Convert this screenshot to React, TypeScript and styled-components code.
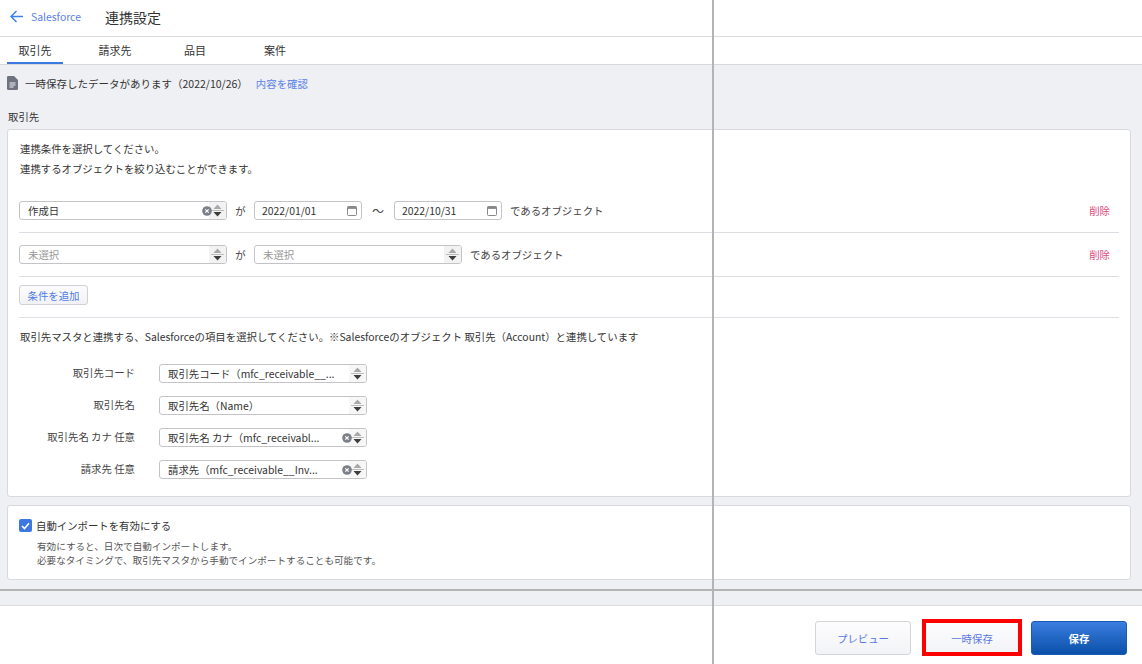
import React from "react";
import styled, { createGlobalStyle } from "styled-components";

const Global = createGlobalStyle`
  html, body { margin: 0; padding: 0; height: 100%; overflow: hidden; background: #fff; }
  body { font-family: "Noto Sans CJK JP", "Noto Sans", sans-serif; color: #333; }
  #root { height: 100%; }
  * { box-sizing: border-box; }
`;

const Page = styled.div`
  position: relative;
  height: 664px;
  display: flex;
  flex-direction: column;
  overflow: hidden;
`;
const Header = styled.header`
  height: 37px;
  flex: none;
  display: flex;
  align-items: center;
  padding-left: 10px;
  border-bottom: 1px solid #dcdce0;
`;
const BackLink = styled.a`
  display: flex;
  align-items: center;
  gap: 8px;
  width: 95px;
  font-size: 10.4px;
  color: #5b82e6;
  margin-top: -4px;
`;
const Title = styled.h1`
  margin: -2px 0 0 0;
  font-size: 14px;
  font-weight: 400;
  color: #333;
`;
const Tabs = styled.nav`
  height: 28px;
  flex: none;
  display: flex;
  gap: 24px;
  padding-left: 7px;
  border-bottom: 1px solid #d8d8dc;
`;
const Tab = styled.div<{ $active?: boolean }>`
  width: 56px;
  height: 27px;
  display: flex;
  align-items: center;
  justify-content: center;
  font-size: 11px;
  color: #333;
  padding-top: 1px;
  border-bottom: 2px solid ${(p) => (p.$active ? "#3b78e0" : "transparent")};
`;
const Main = styled.main`
  flex: 1;
  background: #eff0f4;
  padding: 0 11px 0 7px;
`;
const Notice = styled.div`
  display: flex;
  align-items: center;
  height: 38px;
  padding-bottom: 2px;
  font-size: 10.5px;
  color: #333;
  svg { margin-right: 7px; }
`;
const NoticeLink = styled.a`
  color: #5b82e6;
  margin-left: 8px;
  font-size: 10.4px;
`;
const SectionLabel = styled.div`
  margin-top: 5px;
  height: 21px;
  line-height: 18px;
  font-size: 10.4px;
  color: #333;
  padding-left: 1px;
`;
const Card = styled.section`
  background: #fff;
  border: 1px solid #d8d8de;
  border-radius: 3px;
  padding: 9px 11px 17px;
`;
const AutoCard = styled(Card)`
  margin-top: 8px;
  height: 75px;
  padding: 12px 11px 0;
`;
const Lead = styled.p`
  margin: 0;
  padding-left: 1px;
  line-height: 20px;
  font-size: 10.4px;
  color: #333;
`;
const Conditions = styled.div`
  margin-top: 10px;
`;
const CondRow = styled.div`
  display: flex;
  align-items: center;
  height: 44px;
  border-bottom: 1px solid #dddde4;
  font-size: 10.4px;
`;
const SelectBox = styled.div<{ $w: number; $muted?: boolean }>`
  position: relative;
  width: ${(p) => p.$w}px;
  height: 19px;
  flex: none;
  display: flex;
  align-items: center;
  border: 1px solid #c4c4c8;
  border-radius: 3px;
  padding-left: 8px;
  font-size: 10.4px;
  color: ${(p) => (p.$muted ? "#999" : "#333")};
  background: #fff;
  overflow: hidden;
`;
const SelectText = styled.span`
  flex: 1;
  white-space: nowrap;
  overflow: hidden;
`;
const Stepper = styled.span<{ $plain?: boolean }>`
  width: 17px;
  height: 100%;
  flex: none;
  display: flex;
  align-items: center;
  justify-content: center;
  background: ${(p) => (p.$plain ? "#f6f6f6" : "#f2f2f2")};
`;
const ClearIcon = styled.svg`
  flex: none;
  margin-right: -3px;
  position: relative;
  z-index: 1;
`;
const Conj = styled.span<{ $w: number; $big?: boolean }>`
  width: ${(p) => p.$w}px;
  flex: none;
  text-align: center;
  font-size: ${(p) => (p.$big ? "12px" : "10.4px")};
  color: #444;
`;
const DateBox = styled.div<{ $muted?: boolean }>`
  width: 108px;
  height: 19px;
  flex: none;
  display: flex;
  align-items: center;
  justify-content: space-between;
  border: 1px solid #c4c4c8;
  border-radius: 3px;
  padding: 0 4px 0 7px;
  font-size: 10.4px;
  color: ${(p) => (p.$muted ? "#999" : "#333")};
`;
const Suffix = styled.span`
  margin-left: 8px;
  font-size: 10.4px;
  color: #444;
`;
const Delete = styled.a`
  margin-left: auto;
  margin-right: 9px;
  font-size: 10.4px;
  color: #dc4c80;
`;
const AddButton = styled.button`
  display: block;
  margin: 8px 0 12px;
  width: 69px;
  height: 20px;
  padding: 0;
  font: inherit;
  font-size: 10.4px;
  color: #4f7be6;
  background: linear-gradient(#fcfcfd, #f1f2f5);
  border: 1px solid #d0d0d6;
  border-radius: 3px;
`;
const MapLead = styled(Lead)`
  border-top: 1px solid #dddde4;
  padding-top: 9px;
  height: 30px;
  line-height: 20px;
`;
const FormGrid = styled.div`
  margin-top: 17px;
  display: grid;
  grid-template-columns: 116px 208px;
  column-gap: 24px;
  row-gap: 13px;
  align-items: center;
`;
const FieldLabel = styled.label`
  font-size: 10.4px;
  color: #444;
  text-align: right;
  line-height: 19px;
  margin-top: -2px;
`;
const CheckLine = styled.div`
  display: flex;
  align-items: center;
  gap: 4px;
  font-size: 10.4px;
  color: #333;
`;
const Check = styled.span`
  width: 13px;
  height: 13px;
  border-radius: 2px;
  background: #3b78e0;
  display: flex;
  align-items: center;
  justify-content: center;
`;
const Help = styled.p`
  margin: 6px 0 0 18px;
  font-size: 9.6px;
  line-height: 14px;
  color: #555;
`;
const Footer = styled.footer`
  height: 59px;
  flex: none;
  display: flex;
  justify-content: flex-end;
  align-items: flex-start;
  gap: 12px;
  padding: 15px 15px 0 0;
  background: #fff;
  border-top: 1px solid #dcdce0;
`;
const FootSlot = styled.div<{ $pull?: boolean }>`
  position: relative;
  width: 96px;
  height: 34px;
  margin-left: ${(p) => (p.$pull ? "1px" : "0")};
  margin-right: ${(p) => (p.$pull ? "-1px" : "0")};
`;
const FootButton = styled.button`
  width: 96px;
  height: 34px;
  padding: 0;
  font: inherit;
  font-size: 10.4px;
  color: #5b78e0;
  background: linear-gradient(#fdfdfe, #f2f3f6);
  border: 1px solid #d4d4d8;
  border-radius: 3px;
`;
const SaveButton = styled(FootButton)`
  color: #fff;
  font-weight: 700;
  background: linear-gradient(#3a7de0, #0a50a8);
  border: 1px solid #1a5cb4;
`;
const Highlight = styled.div`
  position: absolute;
  top: -2px;
  bottom: -1px;
  left: -2px;
  right: -2px;
  border: 4px solid #f00;
`;
const VLine = styled.div`
  position: absolute;
  top: 0;
  bottom: 0;
  left: 712px;
  width: 2px;
  background: #b4b4b4;
`;
const HLine = styled.div`
  position: absolute;
  left: 0;
  right: 0;
  top: 589px;
  height: 2px;
  background: #b4b4b4;
`;

const Arrows = () => (
  <svg width="13" height="14" viewBox="0 0 13 14">
    <path d="M6.5 0.5 L10.5 5 H2.5 Z" fill="#a8a8a8" />
    <rect x="0" y="6" width="13" height="1" fill="#bcbcbc" />
    <path d="M6.5 12.5 L10.5 8 H2.5 Z" fill="#3c3c3c" />
  </svg>
);
const Clear = () => (
  <ClearIcon width="10" height="10" viewBox="0 0 10 10">
    <circle cx="5" cy="5" r="4.8" fill="#7b7f88" />
    <path d="M3.3 3.3 L6.7 6.7 M6.7 3.3 L3.3 6.7" stroke="#fff" strokeWidth="1.2" />
  </ClearIcon>
);
const Calendar = () => (
  <svg width="10" height="10" viewBox="0 0 10 10">
    <rect x="0.5" y="0.5" width="9" height="9" rx="1" fill="none" stroke="#888" strokeWidth="1" />
    <rect x="0.5" y="0.5" width="9" height="2.4" fill="#888" />
  </svg>
);

const Select = ({ w, text, muted, clear, plain }: { w: number; text: string; muted?: boolean; clear?: boolean; plain?: boolean }) => (
  <SelectBox $w={w} $muted={muted}>
    <SelectText>{text}</SelectText>
    {clear && <Clear />}
    <Stepper $plain={plain}><Arrows /></Stepper>
  </SelectBox>
);

const fields = [
  { label: "取引先コード", text: "取引先コード（mfc_receivable__...", clear: false },
  { label: "取引先名", text: "取引先名（Name）", clear: false },
  { label: "取引先名 カナ 任意", text: "取引先名 カナ（mfc_receivabl...", clear: true },
  { label: "請求先 任意", text: "請求先（mfc_receivable__Inv...", clear: true },
];

export default function App() {
  return (
    <Page>
      <Global />
      <Header>
        <BackLink>
          <svg width="13" height="13" viewBox="0 0 13 13">
            <path d="M13 6.5 H1.5 M6.5 1 L1 6.5 L6.5 12" fill="none" stroke="#3b82f0" strokeWidth="1.5" />
          </svg>
          Salesforce
        </BackLink>
        <Title>連携設定</Title>
      </Header>
      <Tabs>
        <Tab $active>取引先</Tab>
        <Tab>請求先</Tab>
        <Tab>品目</Tab>
        <Tab>案件</Tab>
      </Tabs>
      <Main>
        <Notice>
          <svg width="11" height="14" viewBox="0 0 11 14">
            <path d="M1.2 0 H7 L11 4 V12.8 Q11 14 9.8 14 H1.2 Q0 14 0 12.8 V1.2 Q0 0 1.2 0 Z" fill="#6f7380" />
            <path d="M2.5 7 H8.5 M2.5 9 H8.5 M2.5 11 H6.5" stroke="#eff0f4" strokeWidth="1" />
          </svg>
          一時保存したデータがあります（2022/10/26）
          <NoticeLink>内容を確認</NoticeLink>
        </Notice>
        <SectionLabel>取引先</SectionLabel>
        <Card>
          <Lead>連携条件を選択してください。</Lead>
          <Lead>連携するオブジェクトを絞り込むことができます。</Lead>
          <Conditions>
            <CondRow>
              <Select w={208} text="作成日" clear />
              <Conj $w={27}>が</Conj>
              <DateBox>2022/01/01<Calendar /></DateBox>
              <Conj $w={32} $big>〜</Conj>
              <DateBox>2022/10/31<Calendar /></DateBox>
              <Suffix>であるオブジェクト</Suffix>
              <Delete>削除</Delete>
            </CondRow>
            <CondRow>
              <Select w={208} text="未選択" muted />
              <Conj $w={27}>が</Conj>
              <Select w={208} text="未選択" muted />
              <Suffix>であるオブジェクト</Suffix>
              <Delete>削除</Delete>
            </CondRow>
          </Conditions>
          <AddButton>条件を追加</AddButton>
          <MapLead>取引先マスタと連携する、Salesforceの項目を選択してください。※Salesforceのオブジェクト 取引先（Account）と連携しています</MapLead>
          <FormGrid>
            {fields.map((f) => (
              <React.Fragment key={f.label}>
                <FieldLabel>{f.label}</FieldLabel>
                <Select w={208} text={f.text} clear={f.clear} plain />
              </React.Fragment>
            ))}
          </FormGrid>
        </Card>
        <AutoCard>
          <CheckLine>
            <Check>
              <svg width="9" height="8" viewBox="0 0 9 8">
                <path d="M1 4 L3.5 6.5 L8 1.2" fill="none" stroke="#fff" strokeWidth="1.6" />
              </svg>
            </Check>
            自動インポートを有効にする
          </CheckLine>
          <Help>
            有効にすると、日次で自動インポートします。
            <br />
            必要なタイミングで、取引先マスタから手動でインポートすることも可能です。
          </Help>
        </AutoCard>
      </Main>
      <Footer>
        <FootSlot><FootButton>プレビュー</FootButton></FootSlot>
        <FootSlot $pull>
          <FootButton>一時保存</FootButton>
          <Highlight />
        </FootSlot>
        <FootSlot><SaveButton>保存</SaveButton></FootSlot>
      </Footer>
      <VLine />
      <HLine />
    </Page>
  );
}
